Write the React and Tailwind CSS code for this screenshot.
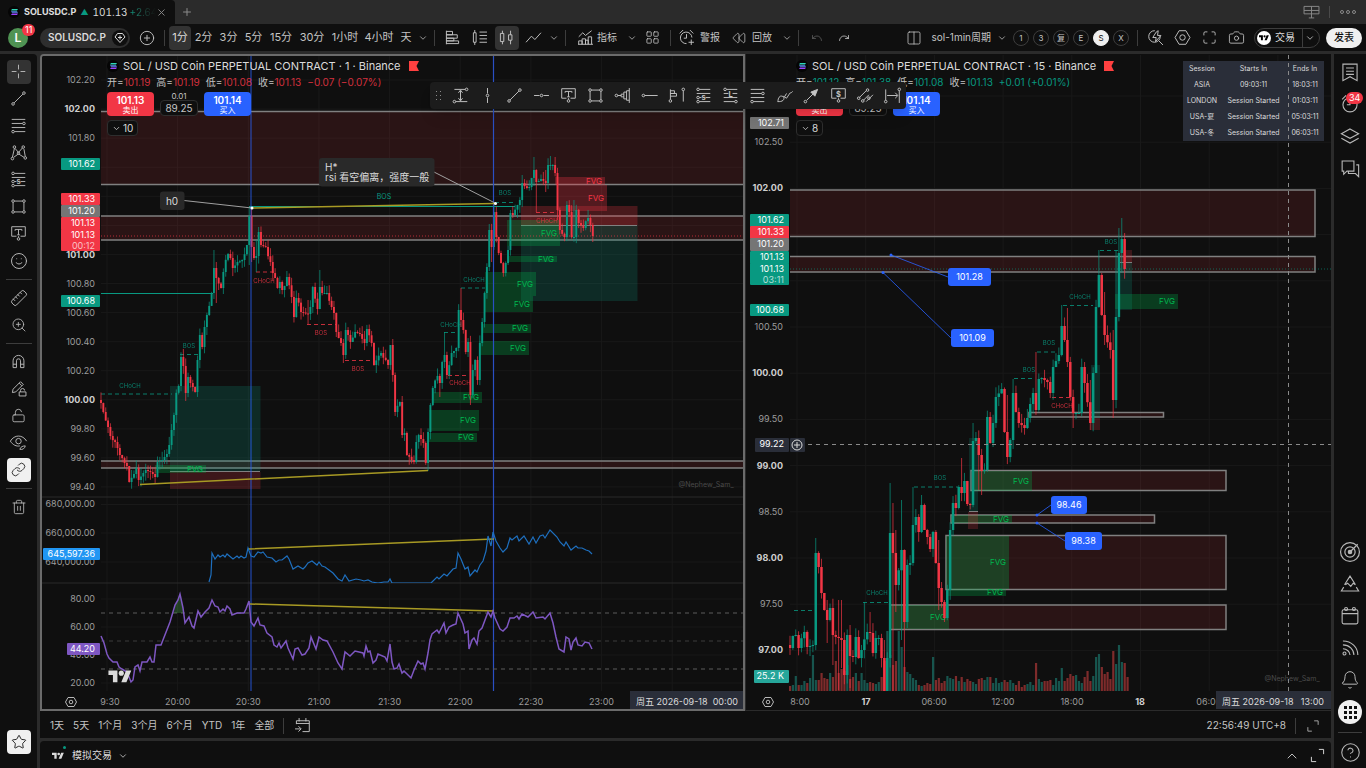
import React from 'react';
import {
  ChevronDown, ChevronUp, Plus, X, Smile, Ruler, ZoomIn, LockOpen, Link, Trash2, Star,
  Camera, Rewind, Undo, Redo, Bell, CircleHelp, CirclePlus, Maximize, Columns2, LayoutGrid,
} from 'lucide-react';

const TEAL = '#089981';
const RED = '#f23645';
const BLUE = '#2962ff';

/* ---------- icons ---------- */

// every shape lives on a 28 x 28 grid, rings are [cx, cy] pairs
const SHAPES = {
  cross: { d: 'M14 4v7M14 17v7M4 14h7M17 14h7' },
  trend: { d: 'M7.5 20.5 20.5 7.5', rings: [[6, 22], [22, 6]] },
  fib: { d: 'M4 5h20M4 11h16M4 17h20M8 23h16', rings: [[22, 11], [6, 23]] },
  pattern: { d: 'M5 21 8 8M9 8l5 6 6-7M22 9l2 11M7 21l7-5 8 5', rings: [[5, 23], [8, 6], [14, 15], [21, 6], [24, 22]] },
  position: { d: 'M8 5h16M4 11h20M8 17h3M17 17h7M8 23h16', rings: [[6, 5], [6, 17], [6, 23]], letter: 's', ly: 20 },
  longPos: { d: 'M8 5h16M4 11h7M17 11h7M4 17h20M4 23h16', rings: [[6, 5], [22, 23]], letter: 'L', ly: 16 },
  rect: { d: 'M8 6h12M8 22h12M6 8v12M22 8v12', rings: [[6, 6], [22, 6], [6, 22], [22, 22]] },
  text: { d: 'M4 4h20v14h-7M4 4v14h7M9 10V8h10v2M14 8v8M12 16h4M14 18v2', rings: [[14, 22]] },
  dollar: { d: 'M4 4h20v14h-7M4 4v14h7M14 18v2', rings: [[14, 22]], letter: '$', ly: 15.5 },
  magnet: { d: 'M6 23V13a8 8 0 0 1 16 0v10h-5V13a3 3 0 0 0-6 0v10zM6 18h5M17 18h5' },
  pencilLock: { d: 'M5 20l1-5L17 4l4 4L10 19zM15 6l4 4M17 19v-2a3 3 0 0 1 6 0M15 19h10v6H15z' },
  brush: { d: 'M4 23c1-2 0-6 4-8 4-1 7 3 4 6-2 2-5 2-8 2zM12 15l5 3M14 16l3-5M17 18l4-6c1-3 3-1 5-4' },
  range: { d: 'M5 5h16M14 7v14M11 10l3-4 3 4M11 18l3 4 3-4M7 23h17', rings: [[23, 5], [5, 23]] },
  vline: { d: 'M14 3v8M14 17v8', rings: [[14, 14]] },
  hline: { d: 'M3 14h8M17 14h8', rings: [[14, 14]] },
  ray: { d: 'M7 14h19', rings: [[5, 14]] },
  profile: { d: 'M24 3v22M24 7h-4v14h4M20 9h-4v10h4M16 12h-4v4h4M7 14h5', rings: [[5, 14]] },
  profile2: { d: 'M5 5v15M5 7h6v4H5M5 11h9v4H5M24 7v16', rings: [[5, 22], [24, 5]] },
  arrow: { d: 'M7 21 20 8' , rings: [[5, 23]], fill: 'M13 9l10-4-4 10z' },
  channel: { d: 'M5 17 15 7M11 21l8-8M15 23l10-10', rings: [[4, 18], [17, 6], [10, 22], [19, 18]] },
  dateRange: { d: 'M4 5v16M6 14h15M18 10l4 4-4 4M24 7v18', rings: [[4, 23], [24, 5]] },
  bars: { d: 'M5 4v20M5 5h9v5H5M5 10h16v5H5M5 15h11v4H5M5 19h18v4H5' },
  candlesList: { d: 'M7 3v4M7 21v4M5 7h4v14H5zM14 6h11M14 11h11M14 16h11M14 21h11' },
  candles: { d: 'M8 4v4M8 20v4M5 8h5v12H5zM20 4v6M20 18v6M17 10h5v8h-5z' },
  line: { d: 'M3 21l8-9 5 5 9-10' },
  indicators: { d: 'M4 13l6-6 4 4 9-7M4 24v-5h5v5M9 24v-8h5v8M14 24v-6h4v6M18 24V13h5v11M3 24h22' },
  alarm: { d: 'M22 14a8.500 8.500 0 1 0-8 9M14 9v6h-4M4 8l5-5M19 3l5 5M21 17v8M17 21h8' },
  searchBolt: { d: 'M21 12a8.500 8.500 0 1 1-8-8M19 19l6 6M15 6l-5 8h5l-1 6 8-9h-5l1-7z' },
  hex: { d: 'M9 4h10l6 10-6 10H9L3 14z', big: [14, 14, 4] },
  list: { d: 'M5 4h18v21l-9-5-9 5zM9 9h10M9 13h10M9 17h10' },
  clock: { d: 'M14 9v6h-4M4 8l5-5M19 3l5 5', big: [14, 15, 9] },
  layers: { d: 'M14 5l11 6-11 6-11-6zM3 17l11 6 11-6' },
  chats: { d: 'M4 5h15v13h-9l-4 4v-4H4zM22 10h3v15l-4-4h-9v-3' },
  target: { d: 'M14 14l9-9', big: [14, 14, 11], mid: [14, 14, 6], dot: [14, 14, 2] },
  peak: { d: 'M7 15l7-11 7 11M8 15l3-2 4 4 3-4 3 2M6 18l-3 5h22l-3-5' },
  calendar: { d: 'M4 8q0-2 2-2h16q2 0 2 2v14q0 2-2 2H6q-2 0-2-2zM4 11h20', rings: [[9, 5], [19, 5]] },
  feed: { d: 'M5 5c11 0 19 8 19 18M5 10c8 0 14 6 14 13M5 15c5 0 9 4 9 8', rings: [[7, 21]] },
  goTo: { d: 'M5 12V7h19v16H14M9 3v5M19 3v5M5 11h19M3 19h8M8 15l4 4-4 4' },
  eyeBrush: { d: 'M2 12c6-10 18-10 24 0M2 12c4 6 9 8 14 7M16 24c1-4 5-5 8-5-1 4-4 6-8 5z', big: [14, 12, 4] },
  corners: { d: 'M16 5h7v7M12 23H5v-7' },
  screens: { d: 'M3 5h22v11H3zM14 5v17M3 11h22M10 22h8' },
};

const Glyph = ({ name, className = 'w-[19px] h-[19px]' }) => {
  const s = SHAPES[name];
  return (
    <svg viewBox="0 0 28 28" className={`flex-shrink-0 ${className}`} fill="none" stroke="currentColor" strokeWidth="1.4" aria-hidden="true">
      <path d={s.d} />
      {s.fill && <path d={s.fill} fill="currentColor" />}
      {(s.rings || []).map(([x, y]) => <circle key={`${x}-${y}`} cx={x} cy={y} r="1.9" />)}
      {s.big && <circle cx={s.big[0]} cy={s.big[1]} r={s.big[2]} />}
      {s.mid && <circle cx={s.mid[0]} cy={s.mid[1]} r={s.mid[2]} />}
      {s.dot && <circle cx={s.dot[0]} cy={s.dot[1]} r={s.dot[2]} fill="currentColor" />}
      {s.letter && (
        <text x="14" y={s.ly} textAnchor="middle" fontSize="11" fontWeight="700" fill="currentColor" stroke="none">{s.letter}</text>
      )}
    </svg>
  );
};

const TvLogo = ({ className }) => (
  <svg viewBox="0 0 36 28" className={className} fill="currentColor" aria-hidden="true">
    <path d="M14 22H7V11H0V4h14v18zM28 22h-8l7.500-18h8L28 22z" />
    <circle cx="20" cy="8" r="4" />
  </svg>
);

const SolLogo = () => (
  <svg viewBox="0 0 12 12" className="w-3 h-3 flex-shrink-0" aria-hidden="true">
    <circle cx="6" cy="6" r="6" fill="#050505" />
    <path d="M4 3h6L9 4.500H3z" fill="#2fd6b5" />
    <path d="M3 5.300h6l1 1.500H4z" fill="#5b8def" />
    <path d="M4 7.600h6L9 9.100H3z" fill="#9a45ff" />
  </svg>
);

const Flag = () => (
  <svg viewBox="0 0 10 10" className="w-2.5 h-2.5" aria-hidden="true">
    <path d="M0 0h10L7.500 5 10 10H0z" fill="#ff4040" />
  </svg>
);

const Sep = () => <span className="w-px h-4 bg-[#3d3d3d] mx-1 flex-shrink-0"></span>;

const Chevron = () => (
  <button className="w-3.5 h-6 flex items-center justify-center flex-shrink-0" aria-label="展开">
    <ChevronDown size={10} strokeWidth={1.8} />
  </button>
);

const IconButton = ({ label, active, dim, children }) => (
  <button
    aria-label={label}
    className={`w-[27px] h-6 flex items-center justify-center flex-shrink-0 ${dim ? 'text-[#5c5c5c]' : ''}`}
  >
    <span className={`w-6 h-6 rounded flex items-center justify-center ${active ? 'bg-[#333333]' : ''}`}>{children}</span>
  </button>
);

/* ---------- top ---------- */

const TabBar = () => (
  <div className="h-6 flex items-center bg-[#2b2b2b] flex-shrink-0">
    <div className="w-[175px] h-6 bg-[#0f0f0f] rounded-tr flex items-center pl-2 text-[10px]">
      <SolLogo />
      <span className="ml-1 text-[9px] font-bold text-[#e0e0e0]">SOLUSDC.P</span>
      <span className="ml-1 text-[8px] text-[#089981]">▲</span>
      <span className="ml-1 text-[#dbdbdb] tabular-nums">101.13</span>
      <span className="ml-0.5 w-[30px] overflow-hidden whitespace-nowrap bg-gradient-to-r from-[#089981] to-[#0f0f0f] bg-clip-text text-transparent">+2.64</span>
      <button aria-label="关闭" className="ml-auto mr-2 text-[#8a8a8a]"><X size={11} /></button>
    </div>
    <button aria-label="新标签" className="ml-1.5 text-[#8a8a8a]"><Plus size={12} /></button>
    <div className="ml-auto flex items-center text-[#8a8a8a] pr-2">
      <button aria-label="窗口"><Glyph name="screens" /></button>
      <span className="w-px h-3 bg-[#4a4a4a] mx-2"></span>
      <button aria-label="更多" className="w-5 flex justify-center gap-0.5">
        {[0, 1, 2].map(i => <span key={i} className="w-1 h-1 rounded-full border border-[#8a8a8a]"></span>)}
      </button>
    </div>
  </div>
);

const INTERVALS = [
  ['2分', 'w-[25px]'], ['3分', 'w-[25px]'], ['5分', 'w-[25px]'], ['15分', 'w-[30px]'],
  ['30分', 'w-8'], ['1小时', 'w-[34px]'], ['4小时', 'w-[34px]'], ['天', 'w-5'],
];

const TopToolbar = () => (
  <div className="h-[27px] flex items-center bg-[#0f0f0f] pl-2 pr-1 text-[11px] text-[#c4c4c4] whitespace-nowrap flex-shrink-0">
    <button className="relative w-5 h-5 rounded-full bg-[#4f9353] text-white font-semibold text-xs flex-shrink-0">
      L
      <span className="absolute -top-1 left-3.5 h-3 px-[3px] rounded-full bg-[#f23645] text-[9px] leading-3 font-normal">11</span>
    </button>
    <button className="ml-3 w-[90px] h-5 rounded-full bg-[#2e2e2e] flex items-center pl-2 pr-0.5 flex-shrink-0">
      <span className="text-left text-[10px] font-semibold text-[#dbdbdb]">SOLUSDC.P</span>
      <span className="ml-auto w-4 h-4 rounded-full bg-[#0f0f0f] flex items-center justify-center">
        <svg viewBox="0 0 12 12" className="w-3 h-3" fill="none" stroke="#dbdbdb">
          <path d="M3.500 1.500h5L11 5l-5 5.500L1 5zM6 3.500v4M4 5.500h4" />
        </svg>
      </span>
    </button>
    <button aria-label="添加" className="ml-2 w-[18px] flex justify-center flex-shrink-0"><CirclePlus size={16} strokeWidth={1.4} /></button>
    <span className="ml-1"></span>
    <Sep />
    <button className="w-[22px] h-6 rounded bg-[#333333] flex-shrink-0 text-[#dbdbdb]">1分</button>
    {INTERVALS.map(([label, w]) => <button key={label} className={`${w} h-6 flex-shrink-0`}>{label}</button>)}
    <Chevron />
    <Sep />
    <IconButton label="成交量分布"><Glyph name="bars" /></IconButton>
    <IconButton label="足迹图"><Glyph name="candlesList" /></IconButton>
    <IconButton label="K线图" active><Glyph name="candles" /></IconButton>
    <IconButton label="线形图"><Glyph name="line" /></IconButton>
    <Chevron />
    <Sep />
    <button className="flex items-center gap-0.5 pl-1.5 text-[10px]"><Glyph name="indicators" />指标</button>
    <span className="ml-2"></span>
    <Chevron />
    <IconButton label="模板"><LayoutGrid size={15} strokeWidth={1.3} /></IconButton>
    <Sep />
    <button className="flex items-center gap-1 pl-0.5 text-[10px]"><Glyph name="alarm" />警报</button>
    <button className="flex items-center gap-1.5 pl-3 text-[10px]"><Rewind size={14} strokeWidth={1.3} />回放</button>
    <span className="ml-2"></span>
    <Chevron />
    <Sep />
    <IconButton label="撤销" dim><Undo size={12} strokeWidth={1.6} /></IconButton>
    <IconButton label="重做"><Redo size={12} strokeWidth={1.6} /></IconButton>

    <div className="ml-auto flex items-center">
      <IconButton label="布局"><Columns2 size={16} strokeWidth={1.2} /></IconButton>
      <button className="mx-1 text-[10px]">sol-1min周期</button>
      <Chevron />
      <span className="ml-0.5"></span>
      {['1', '3', '复', 'E', 'S', 'X'].map(k => (
        <button
          key={k}
          className={`mx-0.5 w-4 h-4 rounded-full border text-[8px] leading-[14px] flex-shrink-0 ${
            k === 'S' ? 'bg-[#f0f0f0] border-[#f0f0f0] text-[#0f0f0f]' : 'border-[#3d3d3d]'
          }`}
        >
          {k}
        </button>
      ))}
      <span className="ml-0.5"></span>
      <Sep />
      <IconButton label="搜索"><Glyph name="searchBolt" /></IconButton>
      <IconButton label="设置"><Glyph name="hex" /></IconButton>
      <IconButton label="全屏"><Maximize size={15} strokeWidth={1.4} /></IconButton>
      <IconButton label="快照"><Camera size={17} strokeWidth={1.2} /></IconButton>
      <div className="ml-1 h-5 w-[66px] rounded-full border border-[#3d3d3d] flex items-center pr-0.5 text-[#dbdbdb]">
        <button className="flex items-center gap-1 pl-0.5 text-[10px] flex-1">
          <span className="w-3.5 h-3.5 rounded-full bg-white text-black flex items-center justify-center">
            <TvLogo className="w-2.5 h-2.5" />
          </span>
          交易
        </button>
        <span className="w-px h-full bg-[#3d3d3d]"></span>
        <Chevron />
      </div>
      <button className="ml-1.5 w-9 h-5 rounded-full bg-[#f0f0f0] text-[#0f0f0f] text-[10px] font-medium">发表</button>
    </div>
  </div>
);

/* ---------- side bars ---------- */

const SideSep = () => <span className="h-[10px] w-[26px] flex items-center"><span className="h-px w-full bg-[#3d3d3d]"></span></span>;

const ToolCell = ({ label, active, white, children }) => (
  <button aria-label={label} className="h-[27px] flex items-center flex-shrink-0">
    <span className={`w-6 h-6 rounded flex items-center justify-center ${active ? 'bg-[#333333]' : ''} ${white ? 'bg-[#f0f0f0] text-[#1a1a1a]' : ''}`}>
      {children}
    </span>
  </button>
);

const LeftBar = () => (
  <nav className="w-[37px] bg-[#0f0f0f] flex flex-col items-center pt-1 pb-[13px] text-[#b8b8b8] flex-shrink-0 rounded-tr">
    <ToolCell label="十字" active><Glyph name="cross" /></ToolCell>
    <ToolCell label="趋势线"><Glyph name="trend" /></ToolCell>
    <ToolCell label="斐波那契"><Glyph name="fib" /></ToolCell>
    <ToolCell label="形态"><Glyph name="pattern" /></ToolCell>
    <ToolCell label="预测"><Glyph name="position" /></ToolCell>
    <ToolCell label="矩形"><Glyph name="rect" /></ToolCell>
    <ToolCell label="文字"><Glyph name="text" /></ToolCell>
    <ToolCell label="表情"><Smile size={18} strokeWidth={1.3} /></ToolCell>
    <SideSep />
    <ToolCell label="测量"><Ruler size={18} strokeWidth={1.3} className="-scale-x-100" /></ToolCell>
    <ToolCell label="放大"><ZoomIn size={16} strokeWidth={1.3} /></ToolCell>
    <SideSep />
    <ToolCell label="磁铁"><Glyph name="magnet" /></ToolCell>
    <ToolCell label="绘图模式"><Glyph name="pencilLock" /></ToolCell>
    <ToolCell label="锁定"><LockOpen size={15} strokeWidth={1.4} /></ToolCell>
    <ToolCell label="隐藏"><Glyph name="eyeBrush" /></ToolCell>
    <ToolCell label="同步" white><Link size={15} strokeWidth={1.4} /></ToolCell>
    <SideSep />
    <ToolCell label="删除"><Trash2 size={16} strokeWidth={1.3} /></ToolCell>
    <span className="flex-1"></span>
    <ToolCell label="收藏" white><Star size={16} strokeWidth={1.4} /></ToolCell>
  </nav>
);

const RightCell = ({ label, children }) => (
  <button aria-label={label} className="relative w-8 h-8 flex items-center justify-center flex-shrink-0">{children}</button>
);

const RightBar = () => (
  <nav className="w-8 bg-[#0f0f0f] flex flex-col items-center pt-0.5 text-[#b8b8b8] flex-shrink-0">
    <RightCell label="观察列表"><Glyph name="list" className="w-[22px] h-[22px]" /></RightCell>
    <RightCell label="警报">
      <Glyph name="clock" className="w-[22px] h-[22px]" />
      <span className="absolute top-1 left-3 h-3 px-[3px] rounded-full bg-[#f23645] text-white text-[9px] leading-3">34</span>
    </RightCell>
    <RightCell label="对象树"><Glyph name="layers" className="w-[22px] h-[22px]" /></RightCell>
    <RightCell label="聊天"><Glyph name="chats" className="w-[22px] h-[22px]" /></RightCell>
    <span className="flex-1"></span>
    <RightCell label="筛选器"><Glyph name="target" className="w-6 h-6" /></RightCell>
    <RightCell label="Pine"><Glyph name="peak" className="w-[22px] h-[22px]" /></RightCell>
    <RightCell label="日历"><Glyph name="calendar" className="w-[22px] h-[22px]" /></RightCell>
    <RightCell label="新闻"><Glyph name="feed" className="w-[22px] h-[22px]" /></RightCell>
    <RightCell label="通知"><Bell size={20} strokeWidth={1.2} /></RightCell>
    <RightCell label="应用">
      <span className="w-6 h-6 rounded-full bg-[#f0f0f0] grid grid-cols-[3px_3px_3px] gap-0.5 place-content-center">
        {[...Array(9).keys()].map(i => <span key={i} className="w-[3px] h-[3px] bg-[#0f0f0f]"></span>)}
      </span>
    </RightCell>
    <span className="h-2 w-6 flex items-center"><span className="h-px w-full bg-[#3d3d3d]"></span></span>
    <RightCell label="帮助"><CircleHelp size={21} strokeWidth={1.2} /></RightCell>
  </nav>
);

/* ---------- chart data: [x, y] way points of the closing price ---------- */

const PATH_1M = [
  [101, 403], [104, 412], [107, 427], [110, 436], [114, 442], [118, 448], [121, 455], [124, 463], [127, 466], [130, 482], [133, 474], [136, 468],
  [139, 480], [143, 473], [146, 470], [150, 472], [153, 474], [155, 477], [157, 462], [160, 461], [163, 460], [166, 454], [169, 445], [171, 430],
  [173, 415], [175, 398], [178, 386], [180, 357], [183, 366], [185, 393], [188, 377], [192, 387], [195, 392], [197, 360], [199, 335], [202, 347],
  [205, 327], [208, 315], [211, 293], [213, 268], [217, 278], [220, 288], [223, 272], [227, 254], [230, 258], [233, 268], [238, 262], [243, 260],
  [247, 245], [249, 216], [251, 247], [253, 258], [257, 256], [258, 232], [261, 245], [265, 247], [270, 262], [274, 278], [277, 288], [280, 282],
  [283, 290], [288, 277], [291, 297], [293, 317], [297, 298], [302, 312], [307, 314], [310, 307], [313, 287], [317, 309], [320, 287], [323, 293],
  [327, 293], [331, 307], [333, 313], [337, 332], [340, 343], [344, 355], [346, 330], [351, 342], [355, 332], [360, 334], [364, 343], [367, 329],
  [372, 343], [374, 365], [380, 353], [385, 360], [388, 365], [391, 345], [393, 375], [395, 412], [399, 402], [402, 435], [405, 433], [408, 455],
  [413, 462], [416, 442], [419, 435], [423, 443], [426, 463], [428, 432], [430, 405], [432, 388], [437, 376], [440, 383], [443, 362], [445, 355],
  [447, 375], [452, 353], [457, 348], [459, 310], [461, 320], [463, 330], [466, 352], [468, 342], [470, 395], [473, 370], [475, 360], [478, 380],
  [480, 343], [483, 322], [485, 293], [487, 267], [489, 230], [492, 247], [494, 212], [496, 237], [499, 253], [503, 273], [506, 263], [508, 250],
  [510, 213], [513, 215], [517, 205], [520, 200], [522, 183], [526, 188], [530, 187], [533, 170], [537, 182], [542, 179], [545, 183], [548, 165],
  [552, 165], [554, 173], [556, 185], [558, 210], [560, 230], [564, 237], [567, 205], [570, 212], [572, 237], [575, 237], [577, 210], [579, 223],
  [583, 228], [587, 218], [590, 225], [592, 236],
];

const WICKS_1M = [
  [213, 250, 280], [217, 262, 303], [249, 207, 265], [251, 207, 262], [256, 240, 272], [320, 270, 300], [307, 300, 324], [344, 340, 361],
  [461, 288, 320], [444, 332, 355], [470, 340, 405], [428, 430, 471], [440, 378, 397], [533, 157, 180], [536, 170, 212], [550, 156, 170],
  [545, 170, 192], [131, 470, 485], [140, 468, 485], [494, 202, 230], [492, 224, 262], [558, 180, 220], [592, 226, 242], [573, 200, 238],
];

const PATH_15M = [
  [790, 648], [793, 636], [796, 635], [799, 648], [803, 632], [808, 647], [812, 645], [814, 632], [815, 553], [818, 567], [821, 593], [823, 610],
  [826, 620], [829, 608], [832, 635], [838, 638], [841, 640], [844, 675], [847, 635], [849, 656], [852, 657], [855, 637], [857, 662], [862, 650],
  [866, 632], [870, 633], [873, 653], [876, 638], [879, 638], [882, 658], [884, 692], [886, 658], [888, 583], [891, 533], [894, 553], [897, 585],
  [901, 550], [904, 622], [907, 565], [910, 563], [912, 525], [915, 517], [918, 532], [922, 505], [924, 530], [928, 537], [930, 549], [933, 532],
  [935, 563], [938, 588], [941, 602], [944, 618], [947, 590], [949, 530], [952, 503], [955, 508], [958, 487], [961, 493], [964, 481], [967, 504],
  [970, 505], [972, 441], [975, 438], [978, 455], [982, 471], [984, 470], [986, 417], [989, 443], [993, 423], [997, 397], [1001, 389], [1003, 417],
  [1007, 457], [1010, 440], [1013, 393], [1016, 412], [1020, 423], [1024, 428], [1028, 418], [1032, 393], [1035, 410], [1038, 379], [1042, 378],
  [1047, 382], [1050, 393], [1054, 367], [1058, 355], [1061, 326], [1065, 340], [1068, 362], [1071, 397], [1074, 413], [1079, 413], [1083, 367],
  [1086, 383], [1089, 423], [1093, 373], [1095, 307], [1098, 275], [1100, 303], [1103, 315], [1106, 335], [1109, 350], [1112, 400], [1115, 317],
  [1118, 253], [1121, 239], [1124, 269], [1126, 268],
];

const WICKS_15M = [
  [817, 538, 575], [826, 600, 643], [832, 608, 665], [841, 600, 668], [838, 600, 690], [849, 625, 688], [863, 602, 640], [869, 612, 642],
  [885, 640, 691], [889, 483, 585], [894, 503, 691], [897, 530, 612], [901, 500, 640], [905, 550, 690], [914, 487, 530], [922, 495, 515],
  [938, 540, 610], [944, 600, 622], [963, 458, 500], [974, 423, 480], [980, 445, 490], [983, 455, 495], [1007, 395, 462], [1014, 379, 400],
  [1037, 352, 385], [1063, 305, 345], [1066, 308, 350], [1074, 395, 428], [1089, 380, 427], [1100, 250, 305], [1114, 330, 418], [1112, 345, 414],
  [1120, 228, 262], [1123, 218, 272], [1106, 292, 345], [1117, 250, 376],
];

const VOLUMES = [
  5, 6, 15, 6, 6, 10, 8, 13, 36, 11, 11, 18, 13, 12, 18, 14, 30, 18, 22, 20, 26, 12, 14, 18, 10, 18, 11, 8, 9, 8, 7, 9, 14, 30,
  60, 36, 26, 30, 60, 44, 24, 19, 17, 13, 11, 6, 5, 6, 8, 7, 34, 11, 13, 8, 10, 15, 13, 12, 15, 10, 14, 9, 12, 10, 9, 7, 12, 13,
  11, 14, 14, 8, 13, 8, 9, 11, 9, 11, 8, 6, 10, 4, 6, 7, 9, 6, 28, 12, 9, 10, 10, 11, 6, 13, 10, 23, 10, 13, 17, 15, 16, 10, 8, 14,
  20, 10, 15, 34, 37, 24, 17, 19, 12, 40, 27, 46, 29, 28, 14,
];

const OI_LINE = '209,582 211,575 212,553 215,559 218,555 220,557 223,555 225,557 227,554 233,559 237,556 239,558 241,556 244,558 246,557 248,548 251,556 254,557 258,552 261,553 263,552 267,557 272,558 276,562 279,560 282,560 287,556 289,559 293,569 298,566 303,569 305,567 308,563 312,561 317,565 319,562 322,566 325,567 333,573 338,579 342,581 345,575 349,581 356,579 361,580 364,581 368,580 372,582 378,583 384,582 388,582 390,579 392,583 431,583 437,577 439,579 444,574 447,576 453,569 456,568 458,553 461,559 465,569 468,567 470,576 475,570 477,572 480,565 483,561 486,551 488,536 491,546 493,532 496,541 500,548 503,552 507,548 510,538 512,540 517,536 519,541 524,536 529,544 533,537 536,543 540,536 543,535 545,538 550,530 557,537 560,542 564,546 566,542 571,550 576,546 578,548 582,548 586,550 589,551 592,554';

const RSI_LINE = '101,636 104,643 107,654 109,658 113,662 117,662 119,667 122,669 127,672 131,682 133,680 135,667 138,665 140,671 142,662 147,662 150,657 152,662 154,662 156,645 161,645 170,622 175,605 178,600 180,594 183,608 185,623 189,617 192,626 194,628 198,611 201,617 205,612 209,608 212,600 215,606 218,607 220,612 223,609 225,611 227,606 230,609 232,615 237,613 244,613 246,609 249,601 251,622 254,626 258,618 260,625 264,626 267,633 272,637 274,645 277,647 279,643 281,648 286,641 288,648 293,659 295,649 298,648 302,655 305,654 309,648 311,637 316,649 319,637 323,640 327,641 333,652 338,663 342,669 345,652 350,656 355,651 363,653 364,656 366,646 368,652 370,651 373,663 376,660 378,654 385,657 387,661 390,644 392,662 394,669 397,668 399,664 402,673 404,671 411,678 414,670 418,661 421,664 423,663 425,669 428,653 430,640 432,634 437,630 439,633 444,623 446,633 449,627 453,625 456,624 458,613 463,624 465,633 468,631 469,649 472,640 474,638 477,644 479,631 482,628 488,612 491,617 493,611 495,618 500,629 503,631 507,627 510,618 514,618 517,616 519,619 522,614 528,617 533,612 536,618 543,617 545,619 550,613 553,623 556,637 559,649 564,652 566,637 569,639 571,650 573,642 576,638 578,645 582,646 585,642 589,643 592,649';

const buildCandles = (path, wicks, step) => {
  const x0 = path[0][0];
  const count = Math.round((path[path.length - 1][0] - x0) / step) + 1;
  const noise = n => Math.abs(Math.sin(n * 12.9898) * 43758.5453) % 1;
  const priceAt = x => {
    const near = path.find(p => Math.abs(p[0] - x) <= step / 2);
    if (near) return near[1];
    const k = path.findIndex(p => p[0] > x);
    const [a, b] = [path[k - 1], path[k]];
    return a[1] + ((b[1] - a[1]) * (x - a[0])) / (b[0] - a[0]);
  };
  let open = path[0][1] - 3;
  return Array.from({ length: count }, (_, i) => {
    const x = x0 + i * step;
    const close = priceAt(x);
    let top = Math.min(open, close) - noise(i + 1) * step * 3.5;
    let bottom = Math.max(open, close) + noise(i + 77) * step * 3.5;
    wicks.forEach(([wx, t, b]) => {
      if (Math.abs(wx - x) <= step / 2) {
        top = Math.min(top, t);
        bottom = Math.max(bottom, b);
      }
    });
    const candle = { x, open, close, top, bottom, up: close <= open };
    open = close;
    return candle;
  });
};

const candles1m = buildCandles(PATH_1M, WICKS_1M, 2.353);
const candles15m = buildCandles(PATH_15M, WICKS_15M, 2.86);

/* ---------- chart parts ---------- */

const Candles = ({ data, width }) => data.map(c => (
  <g key={c.x} fill={c.up ? TEAL : RED}>
    <rect x={c.x - 0.5} y={c.top} width="1" height={c.bottom - c.top} opacity="0.7" />
    <rect x={c.x - width / 2} y={Math.min(c.open, c.close)} width={width} height={Math.max(1, Math.abs(c.close - c.open))} />
  </g>
));

const Label = ({ x, y, size = 9, fill = '#b8b8b8', anchor = 'middle', bold, children }) => (
  <text x={x} y={y + size * 0.36} fontSize={size} fill={fill} textAnchor={anchor} fontWeight={bold ? 700 : 400}>{children}</text>
);

const AxisTag = ({ x, y, w = 39, h = 12, fill, text, sub }) => (
  <g>
    <rect x={x} y={y} width={w} height={h} rx="1" fill={fill} />
    <Label x={x + w - 5} y={y + 6} fill="#fff" anchor="end">{text}</Label>
    {sub && <Label x={x + w - 5} y={y + 17} fill="#ffffffb3" anchor="end">{sub}</Label>}
  </g>
);

const Zone = ({ x, y, w, h }) => (
  <rect x={x} y={y} width={w} height={h} fill="#f23645" fillOpacity="0.12" stroke="#808080" strokeWidth="1.5" />
);

const Fvg = ({ x, y, w, h, color = '#00b84f', opacity = 0.27 }) => (
  <g>
    <rect x={x} y={y} width={w} height={h} fill={color} opacity={opacity} />
    <Label x={x + w - 11} y={y + h / 2} size={8} fill={color}>FVG</Label>
  </g>
);

// dashed structure break with its name above or below
const Break = ({ x1, x2, y, text, tx, ty, color = TEAL, size = 6 }) => (
  <g opacity="0.8">
    <path d={`M${x1} ${y}H${x2}`} stroke={color} strokeDasharray="4 3" />
    {text && <Label x={tx} y={ty} size={size} fill={color}>{text}</Label>}
  </g>
);

const Box = ({ x, y, w, h, color, opacity = 0.2 }) => <rect x={x} y={y} width={w} height={h} fill={color} opacity={opacity} />;

const PriceNote = ({ x, y, w, text, from }) => (
  <g>
    <path d={`M${from[0]} ${from[1]}L${x} ${y + 9}`} stroke={BLUE} opacity="0.8" />
    <circle cx={from[0]} cy={from[1]} r="1.5" fill={BLUE} />
    <rect x={x} y={y} width={w} height="18" rx="3" fill={BLUE} />
    <Label x={x + w / 2} y={y + 9} fill="#fff">{text}</Label>
  </g>
);

const Gear = ({ x, y }) => (
  <g fill="none" stroke="#b8b8b8">
    <path d={`M${x - 3} ${y - 4.500}h6l2.500 4.500-2.500 4.500h-6l-2.500-4.500z`} />
    <circle cx={x} cy={y} r="1.800" />
  </g>
);

const GRID = '#191919';

const FVG_1M = [
  [507, 220, 53, 26], [507, 256, 50, 6], [485, 272, 51, 24], [485, 296, 48, 16], [482, 324, 49, 9],
  [479, 341, 50, 14], [433, 392, 49, 11], [429, 410, 50, 21], [428, 433, 49, 9], [155, 465, 51, 8],
];

const LeftChart = () => (
  <svg className="absolute inset-0 w-full h-full" role="img" aria-label="SOLUSDC.P 1分">
    <g transform="translate(-42 -56)">
      {[...Array(15).keys()].map(i => <path key={i} d={`M101 ${80 + i * 29.07}H760`} stroke={GRID} />)}
      {[504.5, 533, 562, 599, 627, 655, 683].map(y => <path key={y} d={`M101 ${y}H760`} stroke={GRID} />)}
      {[...Array(9).keys()].map(i => <path key={i} d={`M${107 + i * 70.65} 55V691`} stroke={GRID} />)}
      <path d="M42 497H760M42 583H760" stroke="#2a2a2a" />

      <Zone x={100} y={111.5} w={660} h={73} />
      <Zone x={100} y={216} w={660} h={24} />
      <Zone x={100} y={461} w={660} h={7} />
      <rect x="42" y="56" width="59" height="440" fill="#0f0f0f" />

      <Box x={170} y={386} w={90.5} h={85} color={TEAL} />
      <Box x={170} y={472} w={90.5} h={17} color={RED} />
      <Box x={521} y={206} w={116.5} h={19} color={RED} opacity={0.25} />
      <Box x={521} y={225} w={116.5} h={76} color={TEAL} />
      <path d="M521 225.500H637M170 471.500H260" stroke="#808080" />
      {FVG_1M.map(([x, y, w, h]) => <Fvg key={`${x}-${y}`} x={x} y={y} w={w} h={h} />)}
      <Fvg x={555} y={177} w={50} h={8} color={RED} opacity={0.3} />
      <Fvg x={557} y={185} w={50} h={26} color={RED} opacity={0.3} />

      <path d="M101 293.500H213M249 206.500H515" stroke={TEAL} />
      <path d="M101 236H760" stroke={RED} strokeDasharray="1 2" opacity="0.7" />
      <Break x1={101} x2={172} y={394} text="CHoCH" tx={130} ty={386} />
      <Break x1={180} x2={199} y={354.5} text="BOS" tx={189} ty={346} />
      <Break x1={256} x2={275} y={272} text="CHoCH" tx={264} ty={281} color={RED} />
      <Break x1={307} x2={336} y={324.5} text="BOS" tx={321} ty={333} color={RED} />
      <Break x1={345} x2={374} y={360.5} text="BOS" tx={358} ty={369} color={RED} />
      <Break x1={461} x2={485} y={288} text="CHoCH" tx={474} ty={280} />
      <Break x1={444} x2={459} y={332.5} text="CHoCH" tx={451} ty={325} />
      <Break x1={448} x2={469} y={375.5} text="CHoCH" tx={460} ty={383} color={RED} />
      <Break x1={495} x2={513} y={202.5} text="BOS" tx={505} ty={193} />
      <Break x1={536} x2={557} y={212.5} text="CHoCH" tx={547} ty={221} color={RED} />
      <Label x={384} y={196} size={7} fill={TEAL}>BOS</Label>

      <Candles data={candles1m} width={1.9} />

      <path d="M251 55V691" stroke={BLUE} strokeWidth="2" opacity="0.4" />
      <path d="M493.500 55V691" stroke="#2a4fc4" strokeWidth="1.200" />
      <g stroke="#a89a24" strokeWidth="1.5">
        <path d="M252 208L495 203.500M140 484.500L428 470.500M248 549L494 539M250 604L494 611" />
      </g>

      <g stroke="#a0a0a0">
        <path d="M184 200.500L252 208M434 172L495 203" />
      </g>
      <circle cx="252" cy="208" r="1.500" fill="#fff" />
      <circle cx="495.500" cy="203.500" r="1.500" fill="#fff" />
      <rect x="160" y="191.500" width="24.500" height="18.500" rx="3" fill="#292929" />
      <Label x={172} y={201} size={10} fill="#dbdbdb">h0</Label>
      <rect x="319" y="158" width="115.500" height="28.500" rx="3" fill="#292929" />
      <Label x={325} y={167} size={10} fill="#dbdbdb" anchor="start">H*</Label>
      <Label x={325} y={177.5} size={10} fill="#dbdbdb" anchor="start">rsi 看空偏离，强度一般</Label>
      <Label x={706} y={484} size={7} fill="#4a4a4a">@Nephew_Sam_</Label>

      {/* open interest and rsi */}
      <svg x="101" y="498" width="660" height="85" viewBox="101 498 660 85">
        <polyline points={OI_LINE} fill="none" stroke="#1e6fbe" strokeWidth="1.2" />
      </svg>
      <path d="M101 613H760M101 669H760" stroke="#5c5c5c" strokeDasharray="4 4" />
      <path d="M101 641H760" stroke="#3d3d3d" strokeDasharray="4 4" />
      <path d="M174 613L175 605 178 600 180 594 183 608 184 613z" fill="#4caf50" opacity="0.3" />
      <polyline points={RSI_LINE} fill="none" stroke="#7e57c2" strokeWidth="1.5" />
      <svg x="108" y="668" width="24" height="18" viewBox="0 0 36 28" fill="#dbdbdb">
        <path d="M14 22H7V11H0V4h14v18zM28 22h-8l7.500-18h8L28 22z" />
        <circle cx="20" cy="8" r="4" />
      </svg>

      {/* price scale */}
      {[...Array(15).keys()].filter(i => ![3, 4].includes(i)).map(i => (
        <Label key={i} x={95} y={80 + i * 29.07} anchor="end" bold={[1, 6, 11].includes(i)} fill={[1, 6, 11].includes(i) ? '#cfcfcf' : '#9c9c9c'}>
          {(102.2 - i * 0.2).toFixed(2)}
        </Label>
      ))}
      {[['680,000.00', 504], ['660,000.00', 533], ['640,000.00', 562], ['80.00', 599], ['60.00', 627], ['40.00', 655], ['20.00', 683]].map(([t, y]) => (
        <Label key={t} x={95} y={y} anchor="end" fill="#9c9c9c">{t}</Label>
      ))}
      <AxisTag x={61} y={158} fill={TEAL} text="101.62" />
      <AxisTag x={61} y={193} fill={RED} text="101.33" />
      <AxisTag x={61} y={205} fill="#757575" text="101.20" />
      <AxisTag x={61} y={217} h={13} fill={RED} text="101.13" />
      <AxisTag x={61} y={229} h={22} fill={RED} text="101.13" sub="00:12" />
      <AxisTag x={61} y={295} fill={TEAL} text="100.68" />
      <AxisTag x={43} y={548} w={57} fill="#2196f3" text="645,597.36" />
      <AxisTag x={67} y={643} w={33} fill="#7e57c2" text="44.20" />

      {/* time scale */}
      <Gear x={71} y={702} />
      {['9:30', '20:00', '20:30', '21:00', '21:30', '22:00', '22:30', '23:00'].map((t, i) => (
        <Label key={t} x={(i ? 107 : 110) + i * 70.65} y={702} fill="#9c9c9c">{t}</Label>
      ))}
      <rect x="630" y="691" width="130" height="18" fill="#2a2e39" />
      <Label x={636} y={702} fill="#dbdbdb" anchor="start">周五 2026-09-18</Label>
      <Label x={738} y={702} fill="#dbdbdb" anchor="end">00:00</Label>
    </g>
  </svg>
);

const RightGrid = () => (
  <svg className="absolute inset-0 w-full h-full" aria-hidden="true">
    <g transform="translate(-746 -54)" stroke={GRID}>
      {[...Array(13).keys()].map(i => <path key={i} d={`M790 ${96 + i * 46.2}H1340`} />)}
      {[...Array(8).keys()].map(i => <path key={i} d={`M${797 + i * 68.7} 55V691`} />)}
    </g>
  </svg>
);

const RightChart = () => (
  <svg className="absolute inset-0 w-full h-full" role="img" aria-label="SOLUSDC.P 15分">
    <g transform="translate(-746 -54)">
      <Zone x={789} y={190} w={526} h={46.5} />
      <Zone x={789} y={256.5} w={526} h={15.5} />
      <Zone x={1029} y={412.5} w={134.5} h={4.500} />
      <Zone x={971} y={470.5} w={255} h={20} />
      <Zone x={951} y={515} w={203.5} h={8} />
      <Zone x={946} y={535.5} w={280} h={54} />
      <Zone x={890} y={605} w={336} h={24.5} />
      <rect x="746" y="150" width="44" height="150" fill="#0f0f0f" />
      <Fvg x={1115} y={294} w={63} h={15} />
      <Fvg x={972} y={471} w={60} h={20} />
      <Fvg x={951} y={515} w={61} h={8} />
      <Fvg x={946} y={536} w={63} h={53} />
      <Fvg x={948} y={589} w={58} h={7} />
      <Fvg x={890} y={605} w={59} h={24} />
      <Box x={1120} y={250} w={12} h={12} color={RED} />
      <Box x={1120} y={262} w={12} h={48} color={TEAL} />
      <Box x={1091} y={365} w={9} h={53} color={TEAL} />
      <Box x={1091} y={418} w={9} h={12} color={RED} />
      <Box x={969} y={438} w={9} h={73} color={TEAL} />
      <Box x={968} y={512} w={10} h={17} color={RED} />
      <path d="M1120 262.500H1132M969 511.500H978" stroke="#808080" />

      <Break x1={794} x2={814} y={610.5} />
      <Break x1={863} x2={888} y={602.5} text="CHoCH" tx={877} ty={593} />
      <Break x1={914} x2={958} y={487} text="BOS" tx={940} ty={478} />
      <Break x1={1014} x2={1034} y={378.5} text="BOS" tx={1029} ty={370} />
      <Break x1={1037} x2={1057} y={352} text="BOS" tx={1049} ty={343} />
      <Break x1={1063} x2={1093} y={305.5} text="CHoCH" tx={1080} ty={297} />
      <Break x1={1100} x2={1118} y={250.5} text="BOS" tx={1111} ty={242} />
      <Break x1={1052} x2={1072} y={397.5} text="CHoCH" tx={1062} ty={406} color={RED} />

      {VOLUMES.map((v, i) => (
        <rect key={i} x={789 + i * 2.86} y={691 - v} width="2.200" height={v} fill={candles15m[i]?.up ? '#17554e' : '#7e2b2b'} />
      ))}
      <svg x="789" y="55" width="560" height="636" viewBox="789 55 560 636">
        <Candles data={candles15m} width={2.5} />
      </svg>
      <path d="M790 269H1340" stroke={TEAL} strokeDasharray="1 2" opacity="0.6" />

      <PriceNote x={948} y={268} w={43} text="101.28" from={[891, 255]} />
      <PriceNote x={951} y={329} w={43} text="101.09" from={[883, 272.5]} />
      <PriceNote x={1051} y={496} w={36} text="98.46" from={[1037, 515]} />
      <PriceNote x={1065} y={532} w={37} text="98.38" from={[1037, 523]} />
      <Label x={1292} y={678} size={7} fill="#4a4a4a">@Nephew_Sam_</Label>

      <path d="M808 444.500H1340M1288.500 55V691" stroke="#8a8a8a" strokeDasharray="4 4" />

      {[...Array(12).keys()].filter(i => ![2, 3].includes(i)).map(i => {
        const whole = i % 2 === 1;
        return (
          <Label key={i} x={783} y={142 + i * 46.2} anchor="end" bold={whole} fill={whole ? '#cfcfcf' : '#9c9c9c'}>
            {(102.5 - i * 0.5).toFixed(2)}
          </Label>
        );
      })}
      <AxisTag x={750} y={117} fill="#757575" text="102.71" />
      <AxisTag x={750} y={214} h={13} fill={TEAL} text="101.62" />
      <AxisTag x={750} y={226} h={13} fill={RED} text="101.33" />
      <AxisTag x={750} y={238} h={13} fill="#757575" text="101.20" />
      <AxisTag x={750} y={251} h={13} fill={TEAL} text="101.13" />
      <AxisTag x={750} y={263} h={22} fill={TEAL} text="101.13" sub="03:11" />
      <AxisTag x={750} y={304} fill={TEAL} text="100.68" />
      <AxisTag x={754} y={670} w={35} h={13} fill="#26a69a" text="25.2 K" />
      <AxisTag x={755} y={438} w={34} h={14} fill="#2a2e39" text="99.22" />
      <rect x="790" y="438" width="15" height="14" rx="1" fill="#2a2e39" />
      <circle cx="797" cy="445" r="5" fill="none" stroke="#dbdbdb" />
      <path d="M794 445h6M797 442v6" stroke="#dbdbdb" />

      <Gear x={768} y={702} />
      {[['8:00', 800], ['17', 866, 1], ['06:00', 934], ['12:00', 1003], ['18:00', 1072], ['18', 1140, 1], ['06:0', 1206]].map(([t, x, b]) => (
        <Label key={x} x={x} y={702} bold={b} fill={b ? '#cfcfcf' : '#9c9c9c'}>{t}</Label>
      ))}
      <rect x="1216" y="691" width="130" height="18" fill="#2a2e39" />
      <Label x={1222} y={702} fill="#dbdbdb" anchor="start">周五 2026-09-18</Label>
      <Label x={1324} y={702} fill="#dbdbdb" anchor="end">13:00</Label>
    </g>
  </svg>
);

/* ---------- panes ---------- */

const PaneHeader = ({ interval, ohlc, change, color, count, mid }) => (
  <div className="relative text-[10px] text-[#c4c4c4] whitespace-nowrap">
    <div className="flex items-center h-5 text-[11px] text-[#dbdbdb]">
      <SolLogo />
      <h2 className="ml-1 mr-2">SOL / USD Coin PERPETUAL CONTRACT · {interval} · Binance</h2>
      <Flag />
    </div>
    <div className="flex gap-1.5 h-3 leading-3">
      {['开', '高', '低', '收'].map((k, i) => (
        <span key={k}>{k}=<span className={color}>{ohlc[i]}</span></span>
      ))}
      <span className={color}>{change}</span>
    </div>
    <div className="flex items-start mt-1 text-center">
      <button className="w-[47px] h-6 rounded bg-[#f23645] text-white leading-3">
        <b className="block text-[10px] leading-3 font-semibold">101.13</b><span className="block text-[8px] leading-2">卖出</span>
      </button>
      <div className="w-[50px] px-1.5 text-[8px] leading-2">
        0.01
        <span className="block h-4 rounded border border-[#2e2e2e] bg-[#0f0f0f] text-[10px] leading-[14px]">{mid}</span>
      </div>
      <button className="w-[47px] h-6 rounded bg-[#2962ff] text-white leading-3">
        <b className="block text-[10px] leading-3 font-semibold">101.14</b><span className="block text-[8px] leading-2">买入</span>
      </button>
    </div>
    <button className="mt-1 h-4 px-1 rounded border border-[#2e2e2e] bg-[#0f0f0f] flex items-center gap-0.5 text-[#dbdbdb]">
      <ChevronDown size={9} />{count}
    </button>
  </div>
);

const SESSIONS = [
  ['ASIA', '09:03:11', '18:03:11'],
  ['LONDON', 'Session Started', '01:03:11'],
  ['USA-夏', 'Session Started', '05:03:11'],
  ['USA-冬', 'Session Started', '06:03:11'],
];

const SessionTable = () => (
  <table className="absolute top-[7px] right-[7px] w-[141px] table-fixed bg-[#2a2e39] text-[#dbdbdb] text-[7px] text-center whitespace-nowrap">
    <thead>
      <tr className="h-4">
        <th className="w-[38px] font-normal">Session</th>
        <th className="font-normal">Starts In</th>
        <th className="w-[38px] font-normal">Ends In</th>
      </tr>
    </thead>
    <tbody>
      {SESSIONS.map(row => (
        <tr key={row[0]} className="h-4">{row.map((cell, i) => <td key={i}>{cell}</td>)}</tr>
      ))}
    </tbody>
  </table>
);

const FAVORITES = [
  'range', 'vline', 'trend', 'hline', 'text', 'rect', 'profile', 'ray', 'profile2',
  'position', 'longPos', 'fib', 'brush', 'arrow', 'dollar', 'channel', 'dateRange',
];

const FavoritesBar = () => (
  <div className="absolute top-7 left-[390px] h-[27px] w-[476px] rounded bg-[#1c1c1c] shadow-lg flex items-center text-[#c4c4c4] overflow-hidden">
    <span className="w-[17px] grid grid-cols-[1px_1px] gap-[3px] justify-center flex-shrink-0">
      {[...Array(6).keys()].map(i => <span key={i} className="w-px h-px bg-[#8a8a8a]"></span>)}
    </span>
    {FAVORITES.map(name => <IconButton key={name} label={name}><Glyph name={name} /></IconButton>)}
  </div>
);

const RANGES = ['1天', '5天', '1个月', '3个月', '6个月', 'YTD', '1年', '全部'];

export default function App() {
  return (
    <div className="h-screen flex flex-col bg-[#2b2b2b] overflow-hidden font-['Inter','Noto_Sans_CJK_SC',sans-serif]">
      <TabBar />
      <TopToolbar />
      <div className="flex-1 min-h-0 flex gap-[3px] pt-[3px]">
        <LeftBar />
        <main className="flex-1 min-w-0 flex flex-col">
          <div className="relative flex-1 min-h-0 grid grid-cols-[705fr_586fr]">
            <section className="relative overflow-hidden bg-[#0f0f0f] border-2 border-[#6b6b6b] rounded-tl">
              <LeftChart />
              <div className="absolute left-[65px] top-0">
                <PaneHeader interval="1" ohlc={['101.19', '101.19', '101.08', '101.13']} change="−0.07 (−0.07%)" color="text-[#d32f3d]" count="10" mid="89.25" />
              </div>
            </section>
            <section className="relative overflow-hidden bg-[#0f0f0f] border-l border-b border-[#2b2b2b]">
              <RightGrid />
              <SessionTable />
              <RightChart />
              <div className="absolute left-[50px] top-0.5">
                <PaneHeader interval="15" ohlc={['101.12', '101.38', '101.08', '101.13']} change="+0.01 (+0.01%)" color="text-[#089981]" count="8" mid="89.25" />
              </div>
            </section>
            <FavoritesBar />
          </div>
          <div className="h-[27px] bg-[#0f0f0f] flex items-center gap-[9px] px-[10px] pt-0.5 text-[10px] text-[#c4c4c4] flex-shrink-0">
            {RANGES.map(r => <button key={r}>{r}</button>)}
            <span className="w-px h-4 bg-[#3d3d3d]"></span>
            <button aria-label="前往"><Glyph name="goTo" /></button>
            <button className="ml-auto">22:56:49 UTC+8</button>
            <span className="w-px h-4 bg-[#3d3d3d]"></span>
            <button aria-label="展开"><Glyph name="corners" className="w-4 h-4" /></button>
          </div>
          <div className="h-[27px] mt-[3px] bg-[#0f0f0f] rounded-t flex items-center pl-3 pr-1 pt-0.5 text-[10px] text-[#dbdbdb] flex-shrink-0">
            <span className="relative">
              <TvLogo className="w-3 h-3" />
              <span className="absolute -top-1 -right-0.5 w-[3px] h-[3px] rounded-full bg-[#089981]"></span>
            </span>
            <button className="ml-2">模拟交易</button>
            <span className="ml-1"></span>
            <Chevron />
            <button aria-label="打开" className="ml-auto mr-2"><ChevronUp size={16} strokeWidth={1.3} /></button>
            <button aria-label="最大化"><Glyph name="corners" /></button>
          </div>
        </main>
        <RightBar />
      </div>
    </div>
  );
}
